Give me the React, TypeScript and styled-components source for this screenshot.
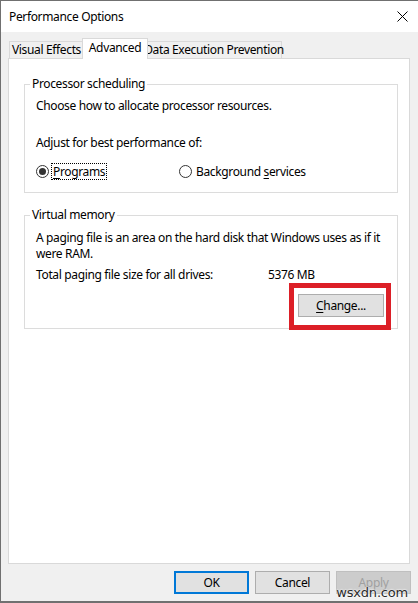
import styled, { createGlobalStyle } from "styled-components";

const GlobalStyle = createGlobalStyle`
  html, body {
    margin: 0;
    padding: 0;
    background: #ffffff;
  }
  body {
    font-family: "Segoe UI", "Noto Sans", "Open Sans", sans-serif;
    font-size: 12px;
    letter-spacing: -0.35px;
    color: #000;
  }
  * {
    box-sizing: border-box;
  }
`;

const Window = styled.div`
  position: relative;
  width: 418px;
  height: 603px;
  display: flex;
  flex-direction: column;
  border: 1px solid #707070;
  border-right: none;
  border-bottom-width: 2px;
`;

const TitleBar = styled.div`
  height: 31px;
  background: #ffffff;
  display: flex;
  align-items: center;
  justify-content: space-between;
  padding: 0 10px 0 8px;
`;

const Title = styled.span`
  font-size: 12px;
  line-height: 16px;
`;

const Body = styled.div`
  flex: 1;
  display: flex;
  flex-direction: column;
  background: #f0f0f0;
  padding: 6px 8px 0 7px;
`;

const TabStrip = styled.div`
  position: relative;
  z-index: 1;
  display: flex;
  align-items: flex-end;
  height: 21px;
  margin-bottom: -1px;
  padding-left: 1px;
`;

const Tab = styled.div<{ $width: number; $active?: boolean }>`
  position: relative;
  flex: none;
  width: ${(p) => p.$width}px;
  height: ${(p) => (p.$active ? 21 : 18)}px;
  margin-left: ${(p) => (p.$active ? -2 : 0)}px;
  margin-right: ${(p) => (p.$active ? -2 : 0)}px;
  z-index: ${(p) => (p.$active ? 2 : 1)};
  border: 1px solid #d9d9d9;
  border-bottom: ${(p) => (p.$active ? "none" : "1px solid #d9d9d9")};
  background: ${(p) => (p.$active ? "#ffffff" : "#f0f0f0")};
  display: flex;
  justify-content: center;
  padding-top: ${(p) => (p.$active ? 1 : 0)}px;
  line-height: 16px;
  white-space: nowrap;
`;

const Panel = styled.div`
  flex: 1;
  background: #ffffff;
  border: 1px solid #d9d9d9;
  padding: 17px 11px 0 15px;
`;

const Group = styled.fieldset<{ $gap?: number }>`
  margin: ${(p) => p.$gap ?? 0}px 0 0 0;
  padding: 0 6px 13px 11px;
  border: 1px solid #dcdcdc;
  min-width: 0;
`;

const GroupNoPad = styled(Group)`
  padding-bottom: 0;
`;

const Legend = styled.legend`
  margin-left: -6px;
  padding: 0 2px;
  line-height: 16px;
  font-size: 12px;
`;

const Line = styled.div<{ $top: number }>`
  margin-top: ${(p) => p.$top}px;
  line-height: 16px;
  white-space: nowrap;
`;

const RadioRow = styled.div`
  margin-top: 12px;
  display: flex;
  align-items: center;
  height: 16px;
`;

const RadioOption = styled.label<{ $width?: number }>`
  display: flex;
  align-items: center;
  width: ${(p) => (p.$width ? `${p.$width}px` : "auto")};
  line-height: 16px;
`;

const RadioCircle = styled.span<{ $checked?: boolean }>`
  width: 13px;
  height: 13px;
  border: 1px solid #333333;
  border-radius: 50%;
  background: #ffffff;
  display: flex;
  align-items: center;
  justify-content: center;
  margin-right: 3px;

  &::after {
    content: "";
    width: 7px;
    height: 7px;
    border-radius: 50%;
    background: ${(p) => (p.$checked ? "#333333" : "transparent")};
  }
`;

const RadioText = styled.span<{ $focus?: boolean }>`
  outline: ${(p) => (p.$focus ? "1px dotted #000" : "none")};
  outline-offset: 0;
  padding: 0 1px;
  line-height: 15px;
`;

const Key = styled.span`
  text-decoration: underline;
  text-underline-offset: 2px;
`;

const SizeRow = styled.div`
  margin-top: 5px;
  display: grid;
  grid-template-columns: 232px auto;
  line-height: 16px;
`;

const ButtonRow = styled.div`
  display: flex;
  justify-content: flex-end;
`;

const Highlight = styled.div`
  position: relative;
  z-index: 1;
  margin-bottom: -2px;
  border: 5px solid #dc1f27;
  padding: 6px 2px 8px 4px;
`;

const Button = styled.button<{ $width: number; $default?: boolean }>`
  width: ${(p) => p.$width}px;
  height: 23px;
  padding: 0;
  font-family: inherit;
  font-size: 12px;
  letter-spacing: inherit;
  color: #000;
  background: #e1e1e1;
  border: 1px solid ${(p) => (p.$default ? "#0078d7" : "#adadad")};
  box-shadow: ${(p) => (p.$default ? "inset 0 0 0 1px #0078d7" : "none")};
  line-height: 16px;

  &:disabled {
    background: #cccccc;
    border-color: #bfbfbf;
    color: #a0a0a0;
  }
`;

const Footer = styled.div`
  height: 37px;
  display: flex;
  justify-content: flex-end;
  align-items: flex-start;
  gap: 6px;
  padding: 7px 0 0 0;
  margin-right: -1px;
`;

const Watermark = styled.span`
  position: absolute;
  right: 10px;
  bottom: 0;
  font-family: "DejaVu Sans", sans-serif;
  font-size: 13px;
  line-height: 16px;
  color: #2a2a2a;
  letter-spacing: -0.2px;
  text-shadow: 0 0 2px #fff, 0 0 2px #fff;
`;

function CloseIcon() {
  return (
    <svg width="11" height="11" viewBox="0 0 11 11">
      <path d="M0.5 0.5 L10.5 10.5 M10.5 0.5 L0.5 10.5" stroke="#000" strokeWidth="1" />
    </svg>
  );
}

export default function App() {
  return (
    <>
      <GlobalStyle />
      <Window>
        <TitleBar>
          <Title>Performance Options</Title>
          <CloseIcon />
        </TitleBar>
        <Body>
          <TabStrip>
            <Tab $width={75}>Visual Effects</Tab>
            <Tab $width={66} $active>
              Advanced
            </Tab>
            <Tab $width={136}>Data Execution Prevention</Tab>
          </TabStrip>
          <Panel>
            <Group>
              <Legend>Processor scheduling</Legend>
              <Line $top={6}>Choose how to allocate processor resources.</Line>
              <Line $top={21}>Adjust for best performance of:</Line>
              <RadioRow>
                <RadioOption $width={143}>
                  <RadioCircle $checked />
                  <RadioText $focus>
                    <Key>P</Key>rograms
                  </RadioText>
                </RadioOption>
                <RadioOption>
                  <RadioCircle />
                  <RadioText>
                    Background <Key>s</Key>ervices
                  </RadioText>
                </RadioOption>
              </RadioRow>
            </Group>
            <GroupNoPad $gap={14}>
              <Legend>Virtual memory</Legend>
              <Line $top={7}>
                A paging file is an area on the hard disk that Windows uses as if it
                <br />
                were RAM.
              </Line>
              <SizeRow>
                <span>Total paging file size for all drives:</span>
                <span>5376 MB</span>
              </SizeRow>
              <ButtonRow>
                <Highlight>
                  <Button $width={86}>
                    <Key>C</Key>hange...
                  </Button>
                </Highlight>
              </ButtonRow>
            </GroupNoPad>
          </Panel>
          <Footer>
            <Button $width={75} $default>
              OK
            </Button>
            <Button $width={75}>Cancel</Button>
            <Button $width={75} disabled>
              Apply
            </Button>
          </Footer>
        </Body>
        <Watermark>wsxdn.com</Watermark>
      </Window>
    </>
  );
}
